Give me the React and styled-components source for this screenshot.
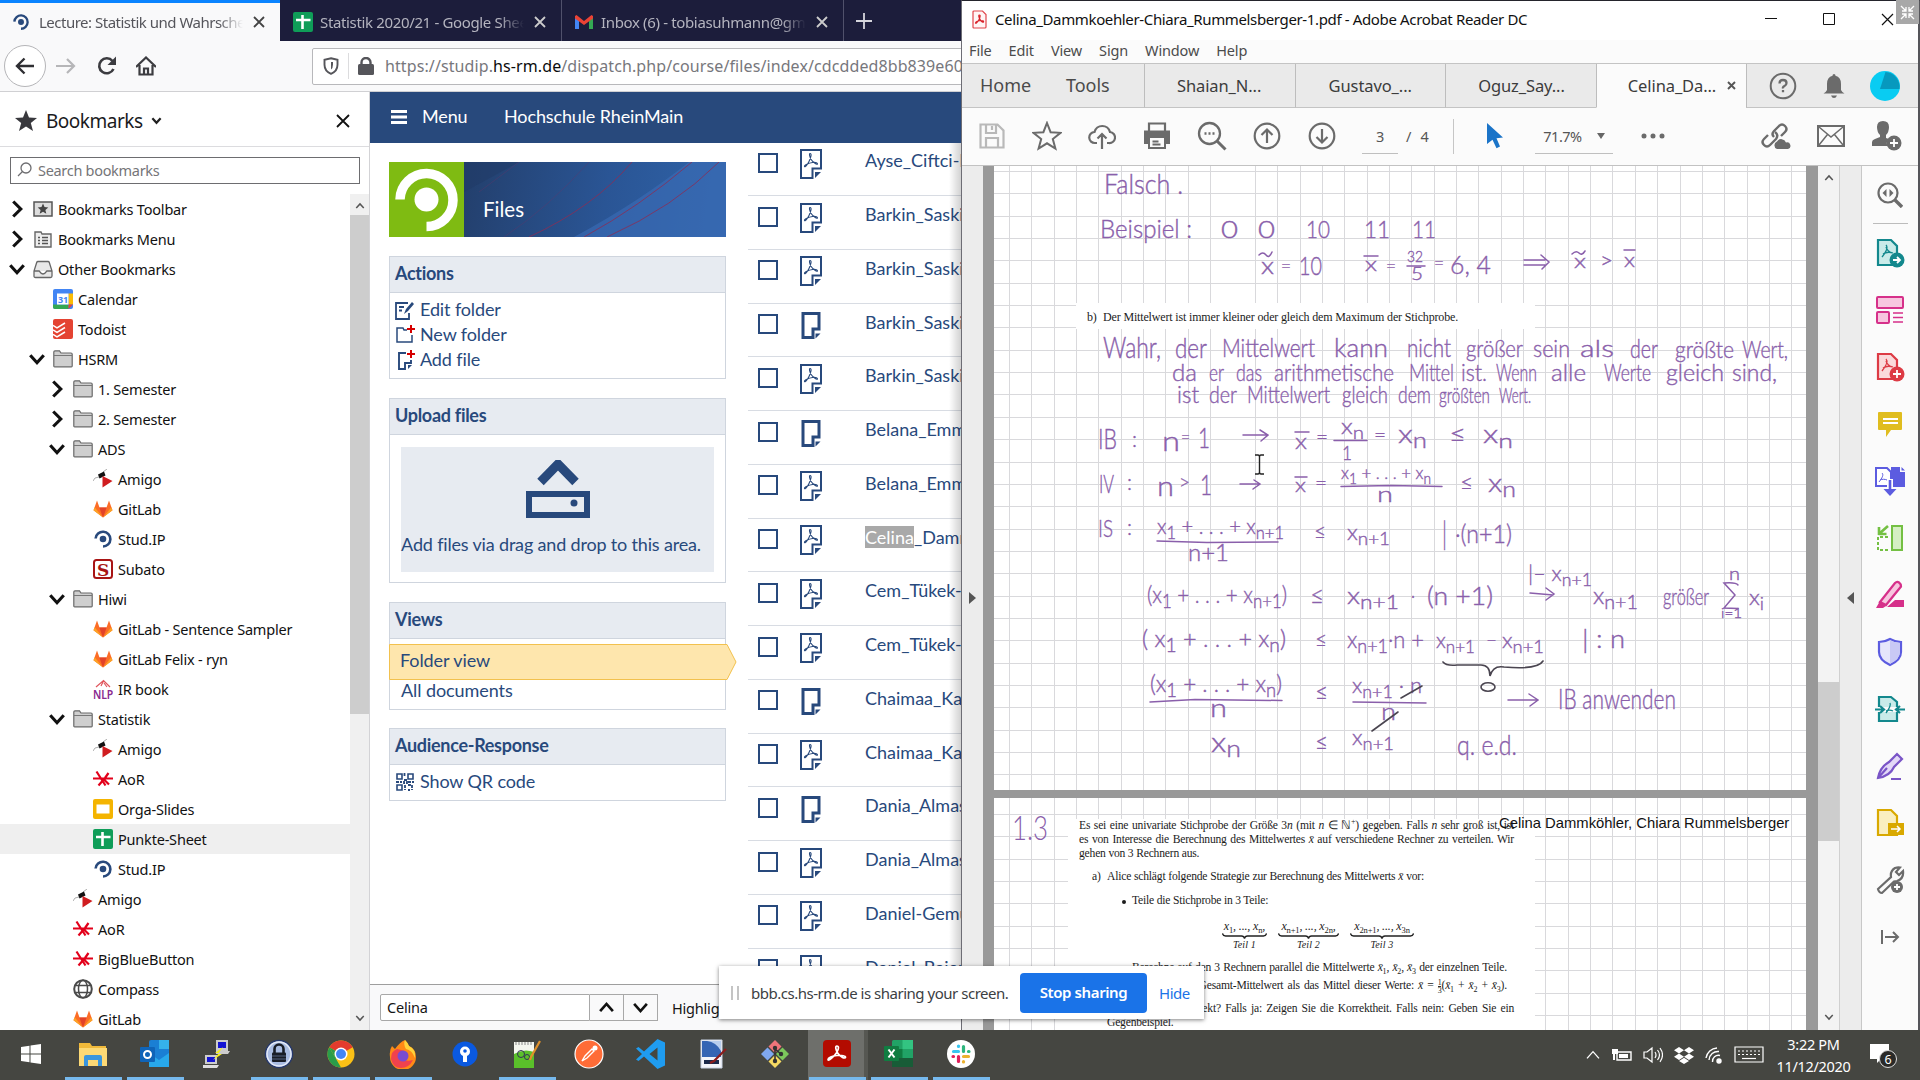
import React from "react";
import styled, { createGlobalStyle, css } from "styled-components";

const ui = `"Noto Sans", "Open Sans", sans-serif`;
const lato = `Lato, "Noto Sans", sans-serif`;
const navy = "#28497c";

const Global = createGlobalStyle`
  *, *::before, *::after { box-sizing: border-box; }
  html, body { margin: 0; padding: 0; overflow: hidden; }
  body { width: 1920px; height: 1080px; font-family: ${ui}; background: #1c1d3b; }
  svg { display: block; flex: none; }
`;

const Desktop = styled.div`
  position: relative;
  width: 1920px;
  height: 1080px;
  display: grid;
  grid-template: 1030px 50px / 961px 959px;
  overflow: hidden;
`;

/* ---------- Firefox ---------- */

const Browser = styled.section`
  display: grid;
  grid-template-rows: 41px 51px 938px;
  background: #fff;
  overflow: hidden;
  min-width: 0;
`;

const TabStrip = styled.div`
  display: flex;
  background: #1c1d3b;
  overflow: hidden;
`;

const BrowserTab = styled.div`
  flex: none;
  width: 282px;
  height: 41px;
  display: flex;
  align-items: center;
  padding: 2px 15px 0 13px;
  border-right: 1px solid #50516b;
  color: #b4b4bf;
  ${(p) =>
    p.$active &&
    css`
      width: 280px;
      padding: 0 15px 0 12px;
      background: #f9f9fa;
      border-right: 0;
      border-top: 3px solid #0a84ff;
      color: #55555b;
    `}
`;

const TabTitle = styled.span`
  flex: 1;
  margin-left: ${(p) => p.$gap}px;
  margin-right: 10px;
  font-size: 15px;
  letter-spacing: ${(p) => p.$ls}px;
  white-space: nowrap;
  overflow: hidden;
  mask-image: linear-gradient(to right, #000 88%, transparent);
`;

const NewTab = styled.div`
  display: flex;
  align-items: center;
  padding-left: 12px;
`;

const NavBar = styled.div`
  display: flex;
  align-items: center;
  background: #f9f9fa;
  border-bottom: 1px solid #d0d0d3;
  padding-left: 4px;
  overflow: hidden;
`;

const BackButton = styled.div`
  flex: none;
  width: 42px;
  height: 42px;
  border: 1px solid #b5b5b8;
  border-radius: 50%;
  background: #fff;
  display: grid;
  place-items: center;
  margin-right: 10px;
`;

const NavIcon = styled.div`
  flex: none;
  width: 20px;
  margin-right: ${(p) => p.$gap}px;
`;

const UrlBox = styled.div`
  flex: none;
  width: 680px;
  height: 37px;
  display: flex;
  align-items: center;
  background: #fff;
  border: 1px solid #b8b8bb;
  border-radius: 2px;
  padding-left: 10px;
`;

const UrlDivider = styled.i`
  width: 1px;
  height: 26px;
  background: #dcdcde;
  margin: 0 9px;
`;

const UrlText = styled.span`
  margin-left: 11px;
  font-size: 16px;
  letter-spacing: 0.1px;
  color: #77777c;
  white-space: nowrap;
  b { font-weight: 400; color: #0c0c0d; }
`;

const BrowserBody = styled.div`
  display: grid;
  grid-template-columns: 370px 591px;
  min-height: 0;
`;

const Sidebar = styled.aside`
  display: grid;
  grid-template-rows: 55px 47px 836px;
  border-right: 1px solid #d3d3d6;
  min-height: 0;
`;

const SidebarHead = styled.div`
  display: flex;
  align-items: center;
  padding: 3px 19px 0 15px;
  border-bottom: 1px solid #dcdcdf;
  font-size: 19px;
  letter-spacing: -0.5px;
  color: #1b1b1e;
  span { margin: 0 8px 0 9px; }
  svg:last-child { margin-left: auto; }
`;

const SearchField = styled.div`
  height: 27px;
  margin: 10px 9px 0 10px;
  border: 1px solid #6d6d70;
  display: flex;
  align-items: center;
  gap: 6px;
  padding: 0 0 2px 6px;
  font-size: 14.5px;
  letter-spacing: -0.3px;
  color: #757578;
`;

const TreeArea = styled.div`
  display: grid;
  grid-template-columns: 350px 19px;
  min-height: 0;
`;

const Tree = styled.ul`
  list-style: none;
  margin: 0;
  padding: 0;
  overflow: hidden;
`;

const TreeRow = styled.li`
  height: 30px;
  display: flex;
  align-items: center;
  padding-left: ${(p) => 8 + p.$level * 20}px;
  background: ${(p) => (p.$selected ? "#efefef" : "transparent")};
  font-size: 14.5px;
  letter-spacing: -0.2px;
  color: #111;
  white-space: nowrap;
  span { margin-left: 5px; }
`;

const Twisty = styled.i`
  width: 18px;
  margin-right: 7px;
`;

const Scrollbar = styled.div`
  display: flex;
  flex-direction: column;
  align-items: center;
  justify-content: space-between;
  background: #f0f0f0;
  padding: 7px 0;
`;

const ScrollThumb = styled.i`
  width: 100%;
  height: ${(p) => p.$h}px;
  margin-top: ${(p) => p.$top}px;
  margin-bottom: auto;
  background: #cdcdcd;
`;

const Site = styled.main`
  display: grid;
  grid-template-rows: 51px 841px 46px;
  min-height: 0;
  font-family: ${lato};
  color: ${navy};
`;

const SiteBar = styled.header`
  background: ${navy};
  color: #fff;
  display: flex;
  align-items: center;
  padding: 0 0 1px 21px;
  font-size: 18px;
  letter-spacing: -0.13px;
  span { margin-top: -3px; }
  span:nth-of-type(1) { margin-left: 15px; width: 82px; }
`;

const SiteBody = styled.div`
  display: grid;
  grid-template-columns: 378px 213px;
  min-height: 0;
  overflow: hidden;
`;

const SiteSide = styled.div`
  padding: 19px 22px 0 19px;
`;

const Banner = styled.div`
  display: flex;
  height: 75px;
  margin-bottom: 19px;
  background: #29508c;
  position: relative;
  overflow: hidden;
`;

const BannerTitle = styled.span`
  position: absolute;
  left: 94px;
  top: 35px;
  font-size: 20.5px;
  line-height: 24px;
  color: #fff;
`;

const Widget = styled.section`
  border: 1px solid #cfd5de;
  height: ${(p) => p.$h}px;
  margin-bottom: ${(p) => p.$gap || 19}px;
`;

const WidgetTitle = styled.h2`
  margin: 0;
  height: 36px;
  line-height: 33px;
  padding-left: 5px;
  background: #e7ebf1;
  border-bottom: 1px solid #cfd5de;
  font-size: 18px;
  font-weight: 700;
  letter-spacing: -0.3px;
`;

const WidgetList = styled.div`
  padding: 4px 0 0 5px;
`;

const WidgetItem = styled.div`
  height: 25px;
  display: flex;
  align-items: center;
  gap: 5px;
  font-size: 18px;
  letter-spacing: -0.12px;
  span { margin-top: -1px; }
`;

const DropZone = styled.div`
  margin: 12px 11px;
  height: 125px;
  background: #e7ebf1;
  display: flex;
  flex-direction: column;
  align-items: center;
  padding-top: 13px;
  font-size: 18px;
  letter-spacing: -0.17px;
  span { margin: 13px 0 0 -13px; white-space: nowrap; }
`;

const ViewItem = styled.div`
  height: 25px;
  line-height: 21px;
  padding-left: 11px;
  font-size: 18px;
  letter-spacing: -0.08px;
`;

const ActiveView = styled.div`
  position: relative;
  width: 347px;
  height: 36px;
  margin: 5px 0 0 -1px;
  font-size: 18px;
  line-height: 33px;
  padding-left: 11px;
  letter-spacing: -0.08px;
  svg { position: absolute; left: 0; top: 0; }
  span { position: relative; }
`;

const FileTable = styled.div`
  position: relative;
  overflow: hidden;
  margin-top: -0.6px;
  &::after {
    content: "";
    position: absolute;
    inset: 0 0 0 auto;
    width: 12px;
    background: linear-gradient(to right, rgba(0, 0, 0, 0), rgba(0, 0, 0, 0.18));
  }
`;

const FileRow = styled.div`
  height: 53.75px;
  border-bottom: 1px solid #d8dce3;
  display: grid;
  grid-template-columns: 20px 22px 1fr;
  column-gap: 22px;
  padding-left: 10px;
`;

const CheckBox = styled.i`
  width: 20px;
  height: 20px;
  margin-top: 10.5px;
  border: 2px solid ${navy};
`;

const FileGlyph = styled.div`
  margin-top: 6.5px;
`;

const FileName = styled.span`
  margin: 7px 0 0 21px;
  font-size: 18px;
  line-height: 22px;
  white-space: nowrap;
  mark { background: #a9a9a9; color: #fff; }
`;

const FindBar = styled.div`
  display: flex;
  align-items: center;
  background: #f9f9fa;
  border-top: 1px solid #9e9e9e;
  padding-left: 10px;
  font-family: ${ui};
  font-size: 14.5px;
  letter-spacing: -0.2px;
  color: #151515;
`;

const FindInput = styled.div`
  flex: none;
  width: 210px;
  height: 27px;
  line-height: 25px;
  padding-left: 6px;
  border: 1px solid #a8a8a8;
  border-radius: 2px 0 0 2px;
  background: #fff;
`;

const FindButton = styled.div`
  flex: none;
  width: 34px;
  height: 27px;
  display: grid;
  place-items: center;
  border: 1px solid #a8a8a8;
  border-left: 0;
`;

const FindLabel = styled.span`
  margin-left: 14px;
`;

/* ---------- Acrobat ---------- */

const Reader = styled.section`
  display: grid;
  grid-template-rows: 39px 23px 45px 58px 864px;
  border-top: 1px solid #24242c;
  border-left: 1px solid #6d6d75;
  border-right: 2px solid #55555a;
  background: #fbfbfb;
  min-width: 0;
  overflow: hidden;
`;

const TitleBar = styled.div`
  display: flex;
  align-items: center;
  background: #fff;
  padding: 0 0 3px 10px;
  font-size: 15px;
  letter-spacing: -0.36px;
  color: #111;
  span { flex: none; margin-left: 8px; width: 770px; white-space: nowrap; }
`;

const WindowIcons = styled.div`
  display: flex;
  gap: 46px;
  align-items: center;
`;

const MenuBar = styled.div`
  display: flex;
  gap: 17px;
  align-items: center;
  padding: 0 0 4px 7px;
  font-size: 14.5px;
  letter-spacing: -0.15px;
  color: #4b4b4b;
`;

const DocTabs = styled.div`
  display: flex;
  background: #eaeaea;
  border-top: 1px solid #c4c4c4;
`;

const AppTab = styled.div`
  flex: none;
  width: ${(p) => p.$w}px;
  padding-left: ${(p) => p.$pad}px;
  border-bottom: 1px solid #c4c4c4;
  line-height: 42px;
  font-size: 18px;
  letter-spacing: -0.05px;
  color: #4b4b4b;
`;

const DocTab = styled.div`
  flex: none;
  width: 150.6px;
  border-left: 1px solid #bdbdbd;
  border-bottom: 1px solid ${(p) => (p.$active ? "#fbfbfb" : "#c4c4c4")};
  background: ${(p) => (p.$active ? "#fbfbfb" : "#eaeaea")};
  display: flex;
  align-items: center;
  padding-left: ${(p) => p.$pad}px;
  font-size: 16.5px;
  letter-spacing: -0.1px;
  color: #3c3c3c;
  svg { margin-left: 11px; }
`;

const TabTools = styled.div`
  flex: 1;
  display: flex;
  align-items: center;
  padding-left: 22px;
  border-left: 1px solid #bdbdbd;
  border-bottom: 1px solid #c4c4c4;
  svg:nth-child(2) { margin: 0 25px 0 26px; }
`;

const ToolBar = styled.div`
  display: flex;
  align-items: center;
  border-bottom: 1px solid #c2c2c2;
  padding: 0 0 1px 15px;
  color: #555;
  font-size: 14.5px;
`;

const ToolSlot = styled.div`
  flex: none;
  width: ${(p) => p.$w || 30}px;
  margin-right: ${(p) => p.$gap}px;
  display: grid;
  place-items: center;
`;

const Underlined = styled.div`
  flex: none;
  width: ${(p) => p.$w}px;
  height: 35px;
  border-bottom: 1px solid #bfbfbf;
  display: flex;
  align-items: center;
  justify-content: center;
  gap: 15px;
  letter-spacing: -0.5px;
`;

const PageTotal = styled.div`
  flex: none;
  display: flex;
  gap: 9px;
  width: 55px;
  padding-left: 8px;
`;

const ToolDivider = styled.i`
  flex: none;
  width: 1px;
  height: 35px;
  background: #c6c6c6;
`;

const Workspace = styled.div`
  display: grid;
  grid-template-columns: 21px 835px 21px 22px 57px;
  min-height: 0;
`;

const NavPane = styled.div`
  background: #ececec;
  border-left: ${(p) => (p.$line ? "1px solid #d0d0d0" : "0")};
  display: flex;
  align-items: center;
  justify-content: center;
`;

const Viewport = styled.div`
  background: #999;
  padding: 0 12px 0 11px;
  overflow: hidden;
`;

const Sheet = styled.article`
  position: relative;
  height: ${(p) => p.$h}px;
  margin-bottom: 8px;
  overflow: hidden;
  background-color: #fff;
  background-image: repeating-linear-gradient(
      to right,
      transparent 0 15px,
      #d9d9dc 15px 16px,
      transparent 16px 22.35px
    ),
    repeating-linear-gradient(
      to bottom,
      transparent 0 ${(p) => p.$y}px,
      #d9d9dc ${(p) => p.$y}px ${(p) => p.$y + 1}px,
      transparent ${(p) => p.$y + 1}px 22.35px
    );
  > svg { position: absolute; left: 0; top: 0; }
`;

const Clip = styled.div`
  margin: ${(p) => p.$top}px 0 0 ${(p) => p.$left}px;
  width: ${(p) => p.$w}px;
  height: ${(p) => p.$h}px;
  background: #fff;
  font-family: "Liberation Serif", "Times New Roman", serif;
  font-size: ${(p) => p.$size}px;
  letter-spacing: ${(p) => p.$ls}px;
  color: #1c1c1c;
  display: flow-root;
`;

const Line = styled.div`
  margin: ${(p) => p.$top || 0}px 0 0 ${(p) => p.$left}px;
  width: ${(p) => p.$w}px;
  height: 14px;
  line-height: 14px;
  white-space: nowrap;
  text-align-last: justify;
  sub, sup { font-size: 8px; line-height: 0; }
`;

const Labeled = styled.div`
  display: flex;
  margin-top: ${(p) => p.$top}px;
  margin-left: ${(p) => p.$left}px;
  > span { flex: none; width: ${(p) => p.$label}px; line-height: 14px; }
`;

const Bullet = styled.i`
  flex: none;
  width: 4px;
  height: 4px;
  margin: 6px 6px 0 0;
  border-radius: 50%;
  background: #1c1c1c;
`;

const Parts = styled.div`
  display: flex;
  gap: 11px;
  margin: 12px 0 0 154px;
`;

const Part = styled.div`
  width: ${(p) => p.$w}px;
  text-align: center;
  font-style: italic;
  font-size: 12px;
  line-height: 13px;
  letter-spacing: -0.15px;
  white-space: nowrap;
  sub { font-size: 8.5px; line-height: 0; font-style: normal; }
  small { display: block; font-size: 10px; line-height: 12px; letter-spacing: 0.15px; }
`;

const Author = styled.div`
  position: absolute;
  left: 505px;
  top: 16px;
  font: 14.8px/18px "Liberation Sans", Arial, sans-serif;
  color: #111;
  white-space: nowrap;
`;

const Frac = styled.span`
  display: inline-flex;
  flex-direction: column;
  vertical-align: middle;
  font-size: 8px;
  line-height: 7px;
  text-align: center;
  b { font-weight: 400; border-bottom: 1px solid #333; }
`;

const PageScroll = styled(Scrollbar)`
  background: #f3f3f3;
  padding: 7px 0 8px;
`;

const ToolPane = styled.div`
  background: #fbfbfb;
  border-left: 1px solid #c8c8c8;
  display: flex;
  flex-direction: column;
  align-items: center;
  overflow: hidden;
`;

const PaneTool = styled.div`
  flex: none;
  height: 57px;
  display: grid;
  place-items: center;
`;

const PaneRule = styled.i`
  flex: none;
  width: 35px;
  height: 1px;
  background: #bcbcbc;
`;

/* ---------- Overlays & taskbar ---------- */

const ShareBar = styled.div`
  position: absolute;
  left: 719px;
  top: 966px;
  width: 485px;
  height: 53px;
  background: #fff;
  box-shadow: 0 1px 4px rgba(0, 0, 0, 0.5);
  display: flex;
  align-items: center;
  padding-left: 12px;
  font-size: 15px;
  letter-spacing: -0.48px;
  color: #3c4043;
  white-space: nowrap;
`;

const Grip = styled.i`
  width: 8px;
  height: 14px;
  border: solid #c4c4c4;
  border-width: 0 2px;
  margin-right: 12px;
`;

const ShareText = styled.span`
  width: 269px;
`;

const StopButton = styled.div`
  width: 127px;
  height: 40px;
  line-height: 39px;
  border-radius: 4px;
  background: #1a73e8;
  color: #fff;
  font-weight: 600;
  text-align: center;
  letter-spacing: -0.4px;
  margin-right: 12px;
`;

const HideLink = styled.span`
  color: #1a73e8;
`;

const FullBadge = styled.div`
  position: absolute;
  right: 1px;
  top: 0;
  width: 23px;
  height: 24px;
  background: #a8a8a8;
  display: grid;
  place-items: center;
`;

const TaskBar = styled.footer`
  grid-column: 1 / 3;
  background: #454641;
  display: flex;
  padding-left: 0;
`;

const TaskItem = styled.div`
  flex: none;
  width: 62px;
  height: 50px;
  display: grid;
  place-items: center;
  background: ${(p) =>
    p.$active ? "linear-gradient(to right, transparent 2px, #6e6f6b 2px 58px, #565752 58px)" : "none"};
  border-style: solid;
  border-color: transparent;
  border-width: 0 0 3px;
  border-image: ${(p) =>
      p.$open
        ? `linear-gradient(to right, transparent 6px, #76b9ed 6px 57px, transparent 57px)`
        : "linear-gradient(transparent, transparent)"}
    3;
`;

const Tray = styled.div`
  margin-left: auto;
  display: flex;
  align-items: center;
  padding-right: 22px;
  gap: 11px;
`;

const Clock = styled.div`
  width: 77px;
  margin-right: 3px;
  text-align: center;
  font-size: 14.5px;
  line-height: 22px;
  letter-spacing: -0.3px;
  color: #fff;
`;

/* ---------- Icons ---------- */

const Svg = ({ w = 20, h, vb, children, ...rest }) => (
  <svg width={w} height={h || w} viewBox={vb || `0 0 ${w} ${h || w}`} fill="none" {...rest}>
    {children}
  </svg>
);

const Cross = ({ s = 11, c = "currentColor", t = 1.8 }) => (
  <Svg w={s} stroke={c} strokeWidth={t}>
    <path d={`M1 1 L${s - 1} ${s - 1} M${s - 1} 1 L1 ${s - 1}`} />
  </Svg>
);

const Chevron = ({ dir = "down", w = 12, c = "#111", t = 2.4 }) => {
  const d = { down: "M1.5 3.5 6 8.5 10.5 3.5", up: "M1.5 8.5 6 3.5 10.5 8.5", right: "M3.5 1 8.5 6 3.5 11" }[dir];
  return (
    <Svg w={w} vb="0 0 12 12" stroke={c} strokeWidth={t}>
      <path d={d} />
    </Svg>
  );
};

const favicons = {
  toolbar: (
    <>
      <rect x="1" y="3" width="18" height="14" fill="#ddd" stroke="#555" strokeWidth="1.5" />
      <path d="M10 4.500l1.500 3.600 3.800.3-2.900 2.500.9 3.800-3.300-2-3.300 2 .9-3.800-2.900-2.500 3.800-.3z" fill="#444" />
    </>
  ),
  menu: (
    <>
      <path d="M2 3h6l1 2h9v13H2z" fill="#eee" stroke="#666" strokeWidth="1.4" />
      <path d="M5 8.500h2M9 8.500h6M5 11.500h2M9 11.500h6M5 14.500h2M9 14.500h6" stroke="#555" strokeWidth="1.3" />
    </>
  ),
  inbox: (
    <path d="M5 2.500h10q1 0 1.300 1L19 12v5q0 1.500-1.500 1.500h-15Q1 18.500 1 17v-5l2.700-8.500q.3-1 1.300-1zM1 12h5c1 0 1 3 4 3s3-3 4-3h5" fill="#e8e8e8" stroke="#666" strokeWidth="1.3" />
  ),
  folder: (
    <>
      <path d="M.8 17V3q0-1.200 1.200-1.200h4.500L8 4h10q1.200 0 1.200 1.200V17q0 .8-.8.8H1.600q-.8 0-.8-.8z" fill="#cfcfcf" stroke="#6a6a6a" strokeWidth="1.2" />
      <path d="M1 6.500h18" stroke="#777" />
    </>
  ),
  calendar: (
    <>
      <rect x="0" y="0" width="20" height="20" rx="2" fill="#4285f4" />
      <path d="M15.500 4.500H20V15.500h-4.500z" fill="#fbbc04" />
      <path d="M4.500 15.500h11V20H2q-2 0-2-2v-2.500z" fill="#34a853" />
      <path d="M15.500 15.500H20L15.500 20z" fill="#ea4335" />
      <rect x="4" y="4.500" width="11.500" height="11" fill="#fff" />
      <text x="10" y="13.500" fontFamily={ui} fontSize="9" fontWeight="700" textAnchor="middle" fill="#4285f4">31</text>
    </>
  ),
  todoist: (
    <>
      <rect width="20" height="20" rx="2" fill="#e44332" />
      <path d="M0 6.500l4 2.300 8-4.800M0 11l4 2.300 8-4.800M0 15.500l4 2.300 8-4.800" stroke="#fff" strokeWidth="1.5" />
    </>
  ),
  amigo: (
    <>
      <path d="M0 12Q1 8 6 8M10 3l4-3" stroke="#999" strokeWidth=".8" />
      <path d="M5 5.500l6-3 1.500 4-6 3z" fill="#111" />
      <path d="M9.500 7L19.500 12 9.500 18.500z" fill="#d01c1f" />
    </>
  ),
  gitlab: (
    <>
      <path d="M10 18.500L.5 11.300 4 1.500l2.500 7h7l2.500-7 3.500 9.800z" fill="#fc6d26" />
      <path d="M10 18.500L6.300 8.500h7.400z" fill="#e24329" />
      <path d="M10 18.500L.5 11.300l1.200-3zM10 18.500l9.500-7.200-1.200-3z" fill="#fca326" />
    </>
  ),
  studip: (
    <>
      <circle cx="10" cy="10" r="3.3" fill={navy} />
      <path d="M2.600 9.500A7.400 7.400 0 1 1 10 17.500" stroke={navy} strokeWidth="2.6" />
    </>
  ),
  subato: (
    <>
      <rect x="1" y="1" width="18" height="18" rx="2.5" fill="#fff" stroke="#a81414" strokeWidth="2" />
      <text x="10" y="16.5" fontFamily="DejaVu Serif, serif" fontSize="17" fontWeight="700" textAnchor="middle" fill="#a81414">S</text>
    </>
  ),
  nlp: (
    <>
      <path d="M3 8l7.500-6.500L17 8M10.500 2L8 7M11 4l3 4" stroke="#e0555c" strokeWidth="1.2" />
      <text x="0" y="19.5" fontFamily={ui} fontSize="12.5" fontWeight="600" textLength="20" lengthAdjust="spacingAndGlyphs" fill="#8a2a8f">NLP</text>
    </>
  ),
  aor: <path d="M0 9.500h20M3.500 2.500l9 14M5.500 16.500L12 9l3.500-5M10 9.500l6 6" stroke="#e2001a" strokeWidth="2.2" />,
  slides: (
    <>
      <rect width="20" height="20" rx="2" fill="#f4b400" />
      <rect x="3.5" y="5.5" width="13" height="9" fill="#fff" />
    </>
  ),
  sheet: (
    <>
      <rect width="20" height="20" rx="2" fill="#0f9d58" />
      <path d="M9.500 3v14M3 8h14.500" stroke="#fff" strokeWidth="2.6" />
    </>
  ),
  globe: (
    <g stroke="#4a4a4a" strokeWidth="1.5">
      <circle cx="10" cy="10" r="8.8" strokeWidth="2" />
      <ellipse cx="10" cy="10" rx="4.5" ry="8.8" />
      <path d="M2.500 6.500h15M2.500 13.500h15" />
    </g>
  ),
};

const tree = [
  [0, "Bookmarks Toolbar", "toolbar", "right"],
  [0, "Bookmarks Menu", "menu", "right"],
  [0, "Other Bookmarks", "inbox", "down"],
  [1, "Calendar", "calendar"],
  [1, "Todoist", "todoist"],
  [1, "HSRM", "folder", "down"],
  [2, "1. Semester", "folder", "right"],
  [2, "2. Semester", "folder", "right"],
  [2, "ADS", "folder", "down"],
  [3, "Amigo", "amigo"],
  [3, "GitLab", "gitlab"],
  [3, "Stud.IP", "studip"],
  [3, "Subato", "subato"],
  [2, "Hiwi", "folder", "down"],
  [3, "GitLab - Sentence Sampler", "gitlab"],
  [3, "GitLab Felix - ryn", "gitlab"],
  [3, "IR book", "nlp"],
  [2, "Statistik", "folder", "down"],
  [3, "Amigo", "amigo"],
  [3, "AoR", "aor"],
  [3, "Orga-Slides", "slides"],
  [3, "Punkte-Sheet", "sheet"],
  [3, "Stud.IP", "studip"],
  [2, "Amigo", "amigo"],
  [2, "AoR", "aor"],
  [2, "BigBlueButton", "aor"],
  [2, "Compass", "globe"],
  [2, "GitLab", "gitlab"],
];

const files = [
  ["pdf", "Ayse_Ciftci-L"],
  ["pdf", "Barkin_Saskia"],
  ["pdf", "Barkin_Saskia"],
  ["file", "Barkin_Saskia"],
  ["pdf", "Barkin_Saskia"],
  ["file", "Belana_Emma"],
  ["pdf", "Belana_Emma"],
  ["pdf", "_Dammk", "Celina"],
  ["pdf", "Cem_Tükek-"],
  ["pdf", "Cem_Tükek-"],
  ["file", "Chaimaa_Ka"],
  ["pdf", "Chaimaa_Ka"],
  ["file", "Dania_Almas"],
  ["pdf", "Dania_Almas"],
  ["pdf", "Daniel-Gemü"],
  ["pdf", "Daniel_Baier"],
];

const PdfFile = () => (
  <Svg w={22} h={30}>
    <path d="M1 1h20v18.500h-8.500V29H1z" stroke={navy} strokeWidth="2" />
    <path d="M15 23h6l-6 6z" fill={navy} />
    <path d="M10 4.500c2 0 1 4-1 8s-4 6-4.500 5 4-3.500 8-4 5 .5 5 1.500-4-1-6-4-2.500-6.500-1.500-6.500z" stroke={navy} strokeWidth="1.1" />
  </Svg>
);

const PlainFile = () => (
  <Svg w={22} h={30}>
    <path d="M3 3.500h16v15.500h-6v8.500H3z" stroke={navy} strokeWidth="3" />
    <path d="M15.500 23.500h5l-5 5z" fill={navy} />
  </Svg>
);

/* ---------- Handwritten notes ---------- */

const ink = "#8a5fab";

const Ink = ({ x, y, w, s = 22, children }) => {
  const parts = children.split(/(_\{[^}]*\})/).filter(Boolean);
  let lowered = false;
  return (
    <text x={x} y={y} fontSize={s} textLength={w} lengthAdjust="spacingAndGlyphs">
      {parts.map((p, i) => {
        const sub = p.startsWith("_{");
        const dy = sub ? 4.5 : lowered ? -4.5 : 0;
        lowered = sub;
        return (
          <tspan key={i} dy={dy} fontSize={sub ? s * 0.82 : s}>
            {sub ? p.slice(2, -1) : p}
          </tspan>
        );
      })}
    </text>
  );
};

const notes = [
  [1104, 194, 79, 27, "Falsch ."],
  [1100, 238, 92, 26, "Beispiel :"],
  [1221, 238, 17, 23, "0"],
  [1258, 238, 17, 23, "0"],
  [1306, 238, 24, 23, "10"],
  [1364, 238, 26, 23, "11"],
  [1412, 238, 24, 23, "11"],
  [1261, 274, 13, 23, "x"],
  [1281, 273, 10, 20, "="],
  [1299, 275, 23, 26, "10"],
  [1365, 271, 12, 20, "x"],
  [1386, 273, 10, 20, "="],
  [1407, 262, 16, 16, "32"],
  [1411, 280, 12, 18, "5"],
  [1434, 270, 10, 20, "="],
  [1450, 274, 41, 26, "6, 4"],
  [1574, 268, 12, 20, "x"],
  [1600, 268, 13, 22, ">"],
  [1624, 267, 11, 20, "x"],
  [1103, 358, 58, 29, "Wahr,"],
  [1175, 358, 32, 27, "der"],
  [1222, 357, 93, 25, "Mittelwert"],
  [1334, 357, 54, 25, "kann"],
  [1407, 357, 44, 25, "nicht"],
  [1466, 357, 57, 24, "größer"],
  [1533, 357, 37, 24, "sein"],
  [1580, 357, 34, 24, "als"],
  [1630, 358, 28, 25, "der"],
  [1675, 358, 59, 24, "größte"],
  [1742, 358, 46, 24, "Wert,"],
  [1172, 381, 25, 24, "da"],
  [1209, 381, 15, 24, "er"],
  [1236, 381, 26, 24, "das"],
  [1274, 381, 120, 24, "arithmetische"],
  [1409, 381, 45, 24, "Mittel"],
  [1461, 381, 26, 23, "ist."],
  [1496, 381, 41, 23, "Wenn"],
  [1551, 381, 35, 23, "alle"],
  [1604, 381, 47, 23, "Werte"],
  [1666, 381, 58, 23, "gleich"],
  [1732, 381, 45, 23, "sind,"],
  [1177, 403, 22, 23, "ist"],
  [1209, 403, 28, 23, "der"],
  [1247, 403, 83, 23, "Mittelwert"],
  [1342, 403, 46, 23, "gleich"],
  [1398, 403, 33, 23, "dem"],
  [1439, 403, 51, 21, "größten"],
  [1499, 403, 32, 21, "Wert."],
  [1098, 449, 19, 28, "IB"],
  [1132, 447, 5, 22, ":"],
  [1162, 451, 18, 28, "n"],
  [1181, 444, 9, 20, "="],
  [1198, 448, 12, 28, "1"],
  [1295, 449, 12, 22, "x"],
  [1316, 444, 12, 22, "="],
  [1341, 434, 23, 22, "x_{n}"],
  [1342, 460, 10, 20, "1"],
  [1374, 442, 12, 22, "="],
  [1398, 443, 29, 26, "x_{n}"],
  [1449, 442, 17, 23, "≤"],
  [1483, 443, 30, 25, "x_{n}"],
  [1099, 493, 15, 25, "IV"],
  [1127, 490, 5, 22, ":"],
  [1157, 496, 17, 28, "n"],
  [1179, 489, 11, 20, ">"],
  [1200, 495, 12, 27, "1"],
  [1295, 492, 11, 20, "x"],
  [1315, 490, 12, 22, "="],
  [1341, 479, 90, 18, "x_{1} + . . . + x_{n}"],
  [1377, 502, 16, 21, "n"],
  [1460, 490, 13, 21, "≤"],
  [1488, 492, 28, 26, "x_{n}"],
  [1098, 537, 15, 24, "IS"],
  [1127, 535, 5, 22, ":"],
  [1157, 534, 127, 21, "x_{1} + . . . + x_{n+1}"],
  [1188, 561, 41, 23, "n+1"],
  [1314, 539, 12, 21, "≤"],
  [1347, 540, 43, 22, "x_{n+1}"],
  [1442, 544, 5, 32, "|"],
  [1455, 543, 57, 26, "·(n+1)"],
  [1147, 603, 140, 24, "(x_{1} + . . . + x_{n+1})"],
  [1310, 604, 14, 25, "≤"],
  [1347, 604, 52, 24, "x_{n+1}"],
  [1411, 603, 4, 22, "·"],
  [1427, 605, 66, 25, "(n +1)"],
  [1528, 581, 64, 22, "|– x_{n+1}"],
  [1593, 604, 45, 24, "x_{n+1}"],
  [1663, 605, 46, 24, "größer"],
  [1729, 580, 11, 17, "n"],
  [1721, 618, 21, 13, "i=1"],
  [1749, 605, 15, 21, "x_{i}"],
  [1142, 647, 144, 24, "( x_{1} + . . . + x_{n})"],
  [1315, 647, 12, 21, "≤"],
  [1347, 648, 77, 24, "x_{n+1}·n +"],
  [1436, 648, 39, 22, "x_{n+1}"],
  [1486, 646, 11, 20, "–"],
  [1502, 648, 42, 22, "x_{n+1}"],
  [1582, 648, 43, 25, "| : n"],
  [1150, 692, 132, 24, "(x_{1} + . . . + x_{n})"],
  [1210, 717, 17, 25, "n"],
  [1315, 700, 13, 23, "≤"],
  [1352, 693, 70, 22, "x_{n+1} · n"],
  [1381, 720, 15, 23, "n"],
  [1558, 709, 118, 27, "IB anwenden"],
  [1211, 752, 30, 28, "x_{n}"],
  [1315, 750, 13, 23, "≤"],
  [1352, 745, 42, 22, "x_{n+1}"],
  [1457, 755, 60, 28, "q. e.d."],
];

const InkLayer = () => (
  <svg width="812" height="624" viewBox="994 166 812 624" fill="none">
    <g fill={ink} stroke={ink} strokeWidth=".4" fontFamily={lato} fontWeight="300">
      {notes.map(([x, y, w, s, t], i) => (
        <Ink key={i} x={x} y={y} w={w} s={s}>
          {t}
        </Ink>
      ))}
    </g>
    <g stroke={ink} strokeWidth="1.5" strokeLinecap="round">
      <path d="M1259 255q4-4 7 0t6-3M1364 256h14M1572 254q4-4 7-1t6-2M1624 250h11" />
      <path d="M1407 266h18" />
      <path d="M1524 260h21M1524 265h21M1541 255l8 7-7 7" />
      <path d="M1243 435h24M1260 430l8 5-7 6M1240 484h20M1254 480l6 4-7 5" />
      <path d="M1295 432h14M1295 477h12M1334 440.500h33M1341 486.500l50-1 51 1" />
      <path d="M1157 541l50 1.500 71-.5" />
      <path d="M1530 593l23 2M1546 588l8 6-8 6" />
      <path d="M1738 585q-2-3-14-2l11 12-11 13 14 .5" />
      <path d="M1150 702l45-2.500 87 1M1353 702l73 1M1508 700h29M1529 694l9 6-8 6" />
    </g>
    <g stroke="#4a4550" strokeWidth="1.6" strokeLinecap="round">
      <path d="M1443 662q3 4 14 3h24q9 0 9 11 3-11 14-9 34 3 39-6" />
      <ellipse cx="1488" cy="687" rx="7" ry="4.3" />
      <path d="M1401 698l21-12M1372 731l26-19" />
    </g>
    <path d="M1255 455h3q1.500 0 1.500 2v15q0 2-1.500 2h-3M1264 455h-3q-1.500 0-1.500 2v15q0 2 1.500 2h3" stroke="#222" strokeWidth="1.4" />
  </svg>
);

const BraceUnder = ({ w }) => (
  <Svg w={w} h={6} stroke="#222" strokeWidth="1.3">
    <path d={`M.5 .5q.5 2.500 3 2.500H${w / 2 - 3}q2.500 0 3 2.500 .5-2.500 3-2.500H${w - 3.5}q2.500 0 3-2.500`} />
  </Svg>
);

const xbar = <i>x̄</i>;

/* ---------- Acrobat icons ---------- */

const G = "#6b6b6b";

const PdfPage = ({ c, bg }) => (
  <>
    <path d="M3 2h13l6 6v19H3z" fill={bg} stroke={c} strokeWidth="2.2" />
    <path d="M11 7c2 2 0 7-4 12M8 16c3-2 7-2 10-1M11 9c1 3 3 5 6 6" stroke={c} strokeWidth="1.3" />
  </>
);

const paneTools = [
  <Svg w={30}>
    <PdfPage c="#13888d" bg="#c9ebe9" />
    <circle cx="22" cy="22" r="7.5" fill="#13888d" />
    <path d="M18 22h7M22 19l3 3-3 3" stroke="#fff" strokeWidth="1.8" />
  </Svg>,
  <Svg w={30} stroke="#d6308a" strokeWidth="2">
    <rect x="2" y="2" width="26" height="11" rx="1" fill="#f7c6df" />
    <rect x="2" y="17" width="12" height="11" rx="1" fill="#f7c6df" />
    <path d="M18 18h10M18 22.500h10M18 27h10" strokeWidth="1.5" />
  </Svg>,
  <Svg w={30}>
    <PdfPage c="#dd3b45" bg="#fadadb" />
    <circle cx="22" cy="22" r="7.5" fill="#dd3b45" />
    <path d="M18 22h8M22 18v8" stroke="#fff" strokeWidth="1.8" />
  </Svg>,
  <Svg w={30}>
    <path d="M4 3h22q1 0 1 1v16q0 1-1 1H16l-5 7v-7H4q-1 0-1-1V4q0-1 1-1z" fill="#e0bd1f" />
    <path d="M8 10h15M8 14h15" stroke="#fff" strokeWidth="1.8" />
  </Svg>,
  <Svg w={32}>
    <path d="M2 3h11l4 4v14H2z" stroke="#5c5ce0" strokeWidth="2" fill="#fff" />
    <path d="M17 2h9v5h5v15H17zM27.500 2L31 5.500h-3.500z" fill="#5c5ce0" />
    <path d="M8 8c2 2 0 5-3 9M6 15c2-1 5-1 7 0" stroke="#5c5ce0" />
    <path d="M16 14v12" stroke="#fff" strokeWidth="6" />
    <path d="M16 15v11" stroke="#5c5ce0" strokeWidth="2.6" />
    <path d="M9.500 24h13L16 31z" fill="#5c5ce0" />
  </Svg>,
  <Svg w={30} stroke="#74c043" strokeWidth="2">
    <rect x="17" y="3" width="10" height="24" fill="#d5efc3" />
    <path d="M13 14H3v13h10" strokeDasharray="3 2" />
    <path d="M4 4v8M3.500 11h8M5 10l8-7" strokeWidth="2.6" />
  </Svg>,
  <Svg w={30}>
    <path d="M5 22L20 3q2-2 4-.5t2 4L11 25z" fill="#f7c6df" stroke="#d6308a" strokeWidth="2.2" />
    <path d="M1 28l4-7 6 5-3 2zM12 27l8-7h9v7z" fill="#d6308a" />
  </Svg>,
  <Svg w={28} h={30}>
    <path d="M14 2q5 3 11 3v10q0 8-11 13Q3 23 3 15V5q6 0 11-3z" fill="#e6e6fb" stroke="#5c5ce0" strokeWidth="2.2" />
    <path d="M14 3q5 3 10 3v9q0 7-10 12z" fill="#c9c9f5" />
  </Svg>,
  <Svg w={30}>
    <path d="M4 13V3h12l6 5v5M4 18v9h18v-9" fill="#c9ebe9" stroke="#13888d" strokeWidth="2.2" />
    <path d="M0 15.500h8M5 12l4 3.500-4 3.500M30 15.500h-8M25 12l-4 3.500 4 3.500" stroke="#13888d" strokeWidth="2.2" />
    <path d="M15 9c1 2-1 6-4 10M11 17c2-1 5-1 7 0" stroke="#13888d" strokeWidth="1.3" />
  </Svg>,
  <Svg w={30} stroke="#7a55c7" strokeWidth="2.2">
    <path d="M3 27Q5 16 14 11l8-8 5 5-8 8Q15 25 3 27zM3 27l9-10M16 28h10" fill="#e3d8f7" />
  </Svg>,
  <Svg w={30}>
    <path d="M3 2h13l6 6v19H3z" fill="#faefc0" stroke="#d9a900" strokeWidth="2.2" />
    <rect x="13" y="15" width="16" height="12" fill="#d9a900" />
    <path d="M16 21h9M22 18l3 3-3 3" stroke="#fff" strokeWidth="1.5" />
  </Svg>,
  <Svg w={30}>
    <path d="M3 24l13-12q-1-6 4-9 3-1 5-.5L21 7l3 3 4-4q1 8-6 10l-3 .5L7 28q-3 0-4-4z" stroke={G} strokeWidth="2.2" />
    <circle cx="22" cy="22" r="6" fill={G} />
    <path d="M19 22h6M22 19v6" stroke="#fff" strokeWidth="1.8" />
  </Svg>,
];

const toolbarIcons = [
  [
    "save",
    <Svg w={28} stroke="#b9b9b9" strokeWidth="2.2">
      <path d="M2.500 2.500h17l6 6v17h-23zM8 3v8h10V3M14 4v4M8 25v-9h12v9" />
    </Svg>,
  ],
  [
    "star",
    <Svg w={30} stroke={G} strokeWidth="2">
      <path d="M15 2l3.600 9.200 9.900.6-7.700 6.200 2.600 9.600-8.400-5.300-8.400 5.300 2.600-9.600L1.500 11.800l9.900-.6z" />
    </Svg>,
  ],
  [
    "upload",
    <Svg w={28} stroke={G} strokeWidth="2.2">
      <path d="M9 21H7a5.500 5.500 0 0 1-.5-11A8 8 0 0 1 22 10a5.500 5.500 0 0 1-1 11h-2M14 27V12M9.500 16.500L14 12l4.500 4.500" />
    </Svg>,
  ],
  [
    "print",
    <Svg w={28}>
      <path d="M6 9V1.500h16V9" stroke={G} strokeWidth="2.2" />
      <path d="M1 8.500h26V22h-4v-7H5v7H1z" fill={G} />
      <path d="M6 15h16v11H6zM9.500 19.500h6M9.500 22.500h8" stroke={G} strokeWidth="2" />
    </Svg>,
  ],
  [
    "zoom",
    <Svg w={30} stroke={G} strokeWidth="2.3">
      <circle cx="12.5" cy="12.5" r="10.5" />
      <path d="M20 20l8.500 8.500" strokeWidth="3" />
      <path d="M7.500 12.500h10.500" strokeDasharray="2 2" />
    </Svg>,
  ],
  [
    "up",
    <Svg w={28} stroke={G} strokeWidth="2.2">
      <circle cx="14" cy="14" r="12.3" />
      <path d="M14 21V8M8.500 13L14 7.500l5.500 5.500" />
    </Svg>,
  ],
  [
    "down",
    <Svg w={28} stroke={G} strokeWidth="2.2">
      <circle cx="14" cy="14" r="12.3" />
      <path d="M14 7v13M8.500 15l5.500 5.500 5.500-5.500" />
    </Svg>,
  ],
];

/* ---------- Taskbar icons ---------- */

const taskItems = [
  ["start", <Svg w={20}><path d="M0 3l8.500-1.300v7.800H0zM9.500 1.500L20 0v9.500H9.500zM0 10.500h8.500v7.800L0 17zM9.500 10.500H20V20L9.500 18.500z" fill="#fff" /></Svg>],
  ["explorer", <Svg w={28} h={26}><path d="M0 2h11l2 3h14v20H0z" fill="#f0b93a" /><path d="M0 7h28v18H0z" fill="#fcd975" /><path d="M5 25v-9q0-2 2-2h14q2 0 2 2v9h-4v-6H9v6z" fill="#3a96dd" /></Svg>, true],
  ["outlook", <Svg w={30}><rect x="9" y="1" width="20" height="27" rx="2" fill="#1a7fd4" /><path d="M19 1h10v9H19z" fill="#35b1ea" /><path d="M9 14l10 7 10-7v14H9z" fill="#28a8ea" /><rect x="0" y="8" width="15" height="15" rx="1" fill="#0f64b8" /><circle cx="7.5" cy="15.5" r="3.5" stroke="#fff" strokeWidth="2" /></Svg>, true],
  ["putty", <Svg w={30}><path d="M14 1h12v11H14z" fill="#ccc" /><path d="M16 3h8v6h-8z" fill="#1414d2" /><path d="M14 12h14l-2 3H14zM3 16h12v9H3z" fill="#ccc" /><path d="M5 18h8v5H5z" fill="#1414d2" /><path d="M1 26h16l-2 3H1z" fill="#ddd" /><path d="M21 8l-8 6h4l-6 7 9-6h-4z" fill="#f6ee1d" /></Svg>],
  ["keepass", <Svg w={30}><circle cx="15" cy="15" r="13.5" fill="#a9bce2" stroke="#27396b" strokeWidth="1.5" /><circle cx="15" cy="15" r="12" stroke="#e4eaf7" strokeWidth="1.5" /><path d="M10.500 14v-4a4.500 4.500 0 0 1 9 0v4" stroke="#181c26" strokeWidth="2.6" /><rect x="8" y="13.5" width="14" height="9.5" rx="1" fill="#181c26" /><path d="M8 17h14M8 20h14" stroke="#6f7ea8" strokeWidth=".7" /></Svg>, true],
  ["chrome", <Svg w={28}><circle cx="14" cy="14" r="13.5" fill="#fbc116" /><path d="M14 14L2.300 7.200A13.500 13.500 0 0 1 25.700 7.200z" fill="#e33b2e" /><path d="M2.300 7.200L14 27.500A13.500 13.500 0 0 1 2.300 7.200z" fill="#2a9d4a" /><path d="M2.300 7.200L9 19l5-5z" fill="#2a9d4a" /><path d="M14 7.500h12L2.300 7.200z" fill="#e33b2e" /><circle cx="14" cy="14" r="6.5" fill="#fff" /><circle cx="14" cy="14" r="5" fill="#4285f4" /></Svg>, true],
  ["firefox", <Svg w={30}><path d="M17 1q3 3 4 6 7 3 7 11a13 13 0 0 1-26 0Q1 11 4 7l3 3q5-7 10-9z" fill="#ff8a16" /><path d="M17 1q3 3 4 6 7 3 6 12-3-8-9-9-3-5-1-9z" fill="#ffd43a" /><path d="M3 20q0-8 6-10l8 2-4 4q3 8 12 5-4 8-12 8T3 20z" fill="#f0424d" /><circle cx="15" cy="17" r="5.5" fill="#7a4bd0" /></Svg>, true],
  ["pin", <Svg w={26}><circle cx="13" cy="13" r="12.5" fill="#0a59e0" /><circle cx="13" cy="10.5" r="5" fill="#fff" /><path d="M11 14h4v7h-4z" fill="#fff" /><circle cx="13" cy="10" r="1.8" fill="#0a59e0" /></Svg>],
  ["notepad", <Svg w={28} h={30}><path d="M1 3h20v26H1z" fill="#f4f6ee" /><path d="M1 15q10-6 20-2v16H1z" fill="#5ac02a" /><path d="M3 3v3M6 3v3M9 3v3M12 3v3M15 3v3M18 3v3" stroke="#888" /><circle cx="8" cy="15" r="3.5" stroke="#335" /><circle cx="14" cy="18" r="2.5" stroke="#335" /><path d="M27 2L18 18l-1 3" stroke="#e0902a" strokeWidth="2.2" /></Svg>, true],
  ["postman", <Svg w={30}><circle cx="15" cy="15" r="14" fill="#ff6c37" stroke="#fff" strokeWidth="1.2" /><path d="M8 22l3-5 7-7 2 2-7 7z" stroke="#fff" strokeWidth="1.4" /><circle cx="21" cy="9" r="2.5" fill="#fff" /></Svg>],
  ["vscode", <Svg w={30}><path d="M21.500 0L29 3.500v23L21.500 30 8 17.500 2.500 22 0 20.500 6 15 0 9.500 2.500 8 8 12.500zM21.500 8.500L13.500 15l8 6.500z" fill="#1f9cf0" fillRule="evenodd" /></Svg>],
  ["paint", <Svg w={28} h={30}><path d="M2 1h21v28H2z" fill="#f3f5fa" stroke="#c9d3e4" /><path d="M3 2h19v16H3z" fill="#3465b4" /><path d="M8 2q9 1 14 10V2z" fill="#b6cdee" /><path d="M5 21h15v4H5z" fill="#1b2a4a" /><path d="M27 10L15 22l-4 2" stroke="#8c1c1c" strokeWidth="2.2" /></Svg>],
  ["git", <Svg w={30}><path d="M15 1l6.500 6.500L15 14 8.500 7.500z" fill="#f0747a" /><path d="M7.500 8.500L14 15l-6.500 6.500L1 15z" fill="#7fa8f0" /><path d="M22.500 8.500L29 15l-6.500 6.500L16 15z" fill="#7cc85c" /><path d="M15 16l6.500 6.500L15 29l-6.500-6.500z" fill="#f6da62" /><path d="M15 8v14M15 10l6 5" stroke="#333" strokeWidth="1.6" /><circle cx="15" cy="22" r="2.2" fill="#333" /><circle cx="21" cy="15" r="2.2" fill="#333" /><circle cx="15" cy="9" r="2.2" fill="#333" /></Svg>],
  ["acrobat", <Svg w={28}><rect width="28" height="27" rx="4" fill="#b30b00" /><path d="M14 6c3 0 1 6-3 10s-6 5-6 3.500 4-3.500 9-4 9 .5 8.500 2-5-.5-7.500-4-3-7.500-1-7.500z" stroke="#fff" strokeWidth="1.7" /></Svg>, true, true],
  ["excel", <Svg w={30}><rect x="8" y="1" width="21" height="27" rx="1.5" fill="#21a366" /><path d="M18.500 1H29v9H18.500z" fill="#33c481" /><path d="M8 10h10.500v9H8z" fill="#107c41" /><path d="M8 19h21v9H8z" fill="#185c37" /><rect y="7" width="15" height="15" rx="1" fill="#107c41" /><path d="M4.500 10.500l6 8M10.500 10.500l-6 8" stroke="#fff" strokeWidth="2" /></Svg>, true],
  ["slack", <Svg w={28}><circle cx="14" cy="14" r="14" fill="#fff" /><g strokeWidth="3.2" strokeLinecap="round"><path d="M11.500 6v.5M6.500 11.500h5" stroke="#36c5f0" /><path d="M16.500 6.500v5M21.500 11.500h.5" stroke="#2eb67d" /><path d="M16.500 16.500h5M16.500 21.500v.5" stroke="#ecb22e" /><path d="M11.500 16.500v5M6 16.500h.5" stroke="#e01e5a" /></g></Svg>, true],
];

export default function App() {
  return (
    <Desktop>
      <Global />

      <Browser>
        <TabStrip>
          <BrowserTab $active>
            <Svg w={18} vb="0 0 20 20">{favicons.studip}</Svg>
            <TabTitle $gap={9} $ls={-0.5}>Lecture: Statistik und Wahrscheinlichkeit</TabTitle>
            <Cross s={12} c="#444" />
          </BrowserTab>
          <BrowserTab>
            <Svg w={20}>{favicons.sheet}</Svg>
            <TabTitle $gap={7} $ls={-0.35}>Statistik 2020/21 - Google Sheets</TabTitle>
            <Cross s={12} c="#ccc" />
          </BrowserTab>
          <BrowserTab>
            <Svg w={18} h={14}>
              <path d="M0 1.500V14h4V6z" fill="#4285f4" />
              <path d="M14 6v8h4V1.500z" fill="#34a853" />
              <path d="M0 1l1.500-1L9 6l7.500-6L18 1v2.500L9 10 0 3.500z" fill="#ea4335" />
            </Svg>
            <TabTitle $gap={8} $ls={-0.35}>Inbox (6) - tobiasuhmann@gmail.com</TabTitle>
            <Cross s={12} c="#ccc" />
          </BrowserTab>
          <NewTab>
            <Svg w={16} stroke="#d5d5dc" strokeWidth="1.8"><path d="M8 0v16M0 8h16" /></Svg>
          </NewTab>
        </TabStrip>

        <NavBar>
          <BackButton>
            <Svg w={20} stroke="#2f2f33" strokeWidth="2.4"><path d="M19 10H2M9.500 2.500L2 10l7.500 7.500" /></Svg>
          </BackButton>
          <NavIcon $gap={21}>
            <Svg w={20} stroke="#b6b6b8" strokeWidth="2.2"><path d="M0 10h18M11 3l7 7-7 7" /></Svg>
          </NavIcon>
          <NavIcon $gap={19}>
            <Svg w={20} stroke="#3c3c40" strokeWidth="2.6"><path d="M16.500 13A7.500 7.500 0 1 1 15.500 5" /><path d="M19 .5V9h-8.500z" fill="#3c3c40" stroke="none" /></Svg>
          </NavIcon>
          <NavIcon $gap={156}>
            <Svg w={20} stroke="#3c3c40" strokeWidth="2.2"><path d="M0 11L10 1.500 20 11M3.500 9v9.500h13V9" /><path d="M8 19v-6.500h4V19" /></Svg>
          </NavIcon>
          <UrlBox>
            <Svg w={16} h={18} stroke="#55555a" strokeWidth="1.9"><path d="M8 1.200l6.500 1.500v5Q14.500 14 8 16.800 1.500 14 1.500 7.700v-5z" /><path d="M8 5v7.500q2-1.500 2-5V5z" fill="#55555a" stroke="none" /></Svg>
            <UrlDivider />
            <Svg w={16} h={18}><rect x="0" y="7" width="16" height="11" rx="1.5" fill="#55555a" /><path d="M3.500 8V5.500a4.500 4.500 0 0 1 9 0V8" stroke="#55555a" strokeWidth="2.4" /></Svg>
            <UrlText>https://studip.<b>hs-rm.de</b>/dispatch.php/course/files/index/cdcdded8bb839e60</UrlText>
          </UrlBox>
        </NavBar>

        <BrowserBody>
          <Sidebar>
            <SidebarHead>
              <Svg w={22}><path d="M11 0l3 7.500 8 .5-6.200 5 2.200 8-7-4.500L4 21l2.200-8L0 8l8-.5z" fill="#38383d" /></Svg>
              <span>Bookmarks</span>
              <Chevron w={11} c="#222" />
              <Cross s={14} c="#111" />
            </SidebarHead>
            <SearchField>
              <Svg w={15} stroke="#6d6d70" strokeWidth="1.3"><circle cx="9" cy="6" r="5" /><path d="M5.500 9.500L1 14" /></Svg>
              Search bookmarks
            </SearchField>
            <TreeArea>
              <Tree>
                {tree.map(([level, label, icon, twisty], i) => (
                  <TreeRow key={i} $level={level} $selected={label === "Punkte-Sheet"}>
                    <Twisty>{twisty && <Chevron dir={twisty} w={18} t={2.1} />}</Twisty>
                    <Svg w={20}>{favicons[icon]}</Svg>
                    <span>{label}</span>
                  </TreeRow>
                ))}
              </Tree>
              <Scrollbar>
                <Chevron dir="up" w={10} c="#555" t={1.8} />
                <ScrollThumb $h={499} $top={4} />
                <Chevron w={10} c="#555" t={1.8} />
              </Scrollbar>
            </TreeArea>
          </Sidebar>

          <Site>
            <SiteBar>
              <Svg w={16} h={14}><path d="M0 1.500h16M0 7h16M0 12.500h16" stroke="#fff" strokeWidth="2.8" /></Svg>
              <span>Menu</span>
              <span>Hochschule RheinMain</span>
            </SiteBar>
            <SiteBody>
              <SiteSide>
                <Banner>
                  <svg width="337" height="75" viewBox="0 0 337 75" fill="none">
                    <defs>
                      <linearGradient id="sky" x1="75" y1="0" x2="337" y2="40" gradientUnits="userSpaceOnUse">
                        <stop offset="0" stopColor="#233f6c" />
                        <stop offset=".55" stopColor="#2a5595" />
                        <stop offset="1" stopColor="#2f63a8" />
                      </linearGradient>
                    </defs>
                    <rect x="75" width="262" height="75" fill="url(#sky)" />
                    <path d="M185 75Q250 40 300 0h37v75z" fill="#3a6cb5" opacity=".65" />
                    <path d="M75 30L130 0H75z" fill="#1f3a66" opacity=".5" />
                    <path d="M140 75Q205 45 243 0M218 75Q285 45 330 0M195 75Q250 45 303 0" stroke="#8b2d55" strokeWidth="1" opacity=".8" />
                    <path d="M115 75Q160 45 200 0M90 30L130 0" stroke="#6b3566" strokeWidth=".7" opacity=".5" />
                    <rect width="75" height="75" fill="#7fbb12" />
                    <circle cx="37.5" cy="37.5" r="12" fill="#fff" />
                    <path d="M11 37.500A26.500 26.500 0 1 1 37.500 64.500" stroke="#fff" strokeWidth="9.5" />
                  </svg>
                  <BannerTitle>Files</BannerTitle>
                </Banner>
                <Widget $h={123}>
                  <WidgetTitle>Actions</WidgetTitle>
                  <WidgetList>
                    <WidgetItem>
                      <Svg w={20} stroke={navy} strokeWidth="1.8"><path d="M13 3H1v16h13v-6M4 7h5M4 10.500h3" /><path d="M9 14l2-5 6-7 2 2-6 7z" fill={navy} stroke="none" /></Svg>
                      <span>Edit folder</span>
                    </WidgetItem>
                    <WidgetItem>
                      <Svg w={20} stroke={navy} strokeWidth="1.5"><path d="M12 5H9L8 3H2v14h15v-7" /><path d="M16 0v8M12 4h8" stroke="#d60000" strokeWidth="2" /></Svg>
                      <span>New folder</span>
                    </WidgetItem>
                    <WidgetItem>
                      <Svg w={20} stroke={navy} strokeWidth="1.9"><path d="M11 3H4v16h6v-6h6v-3" /><path d="M13 15h4l-4 4z" fill={navy} stroke="none" /><path d="M16 0v8M12 4h8" stroke="#d60000" strokeWidth="2" /></Svg>
                      <span>Add file</span>
                    </WidgetItem>
                  </WidgetList>
                </Widget>
                <Widget $h={185}>
                  <WidgetTitle>Upload files</WidgetTitle>
                  <DropZone>
                    <Svg w={64} h={60}>
                      <path d="M14.500 22L32 4l17.500 18" stroke={navy} strokeWidth="9" />
                      <path d="M3 34h58v21H3z" stroke={navy} strokeWidth="6" />
                      <circle cx="48" cy="43" r="3.5" fill={navy} />
                    </Svg>
                    <span>Add files via drag and drop to this area.</span>
                  </DropZone>
                </Widget>
                <Widget $h={108} $gap={18}>
                  <WidgetTitle>Views</WidgetTitle>
                  <ActiveView>
                    <Svg w={348} h={36}><path d="M.5 .5H338l9 17.500-9 17.500H.5z" fill="#fee6ad" stroke="#f2c14e" /></Svg>
                    <span>Folder view</span>
                  </ActiveView>
                  <ViewItem>All documents</ViewItem>
                </Widget>
                <Widget $h={73}>
                  <WidgetTitle>Audience-Response</WidgetTitle>
                  <WidgetList>
                    <WidgetItem>
                      <Svg w={20} stroke={navy} strokeWidth="1.6">
                        <path d="M2 2h5v5H2zM13 2h5v5h-5zM2 13h5v5H2z" />
                        <path d="M9.500 1v4M9 8h3v3H9zM1 10h6M13 10h6M10 13v5M13 13h2v2M17 13v5M13 18h2" strokeWidth="1.8" strokeDasharray="3 1" />
                      </Svg>
                      <span>Show QR code</span>
                    </WidgetItem>
                  </WidgetList>
                </Widget>
              </SiteSide>
              <FileTable>
                {files.map(([kind, name, hit], i) => (
                  <FileRow key={i}>
                    <CheckBox />
                    <FileGlyph>{kind === "pdf" ? <PdfFile /> : <PlainFile />}</FileGlyph>
                    <FileName>
                      {hit && <mark>{hit}</mark>}
                      {name}
                    </FileName>
                  </FileRow>
                ))}
              </FileTable>
            </SiteBody>
            <FindBar>
              <FindInput>Celina</FindInput>
              <FindButton><Chevron dir="up" w={17} t={1.9} /></FindButton>
              <FindButton><Chevron w={17} t={1.9} /></FindButton>
              <FindLabel>Highlight All</FindLabel>
            </FindBar>
          </Site>
        </BrowserBody>
      </Browser>

      <Reader>
        <TitleBar>
          <Svg w={15} h={19}>
            <path d="M1 2q0-1 1-1h8.500L14 4.500V17q0 1-1 1H2q-1 0-1-1z" stroke="#e0454b" strokeWidth="1.2" fill="#fff5f5" />
            <path d="M7.500 5c1.500 0 0 4-1 5.500S3.500 14 3.500 13s3-2.500 5-2.500 3.500.5 3 1.500-3-1-4-3.500S6.500 5 7.500 5z" stroke="#d8222a" strokeWidth="1.2" />
          </Svg>
          <span>Celina_Dammkoehler-Chiara_Rummelsberger-1.pdf - Adobe Acrobat Reader DC</span>
          <WindowIcons>
            <Svg w={12} stroke="#111"><path d="M0 5.500h12" /></Svg>
            <Svg w={12} stroke="#111"><path d="M.5 .5h11v11H.5z" /></Svg>
            <Cross s={13} c="#111" t={1.2} />
          </WindowIcons>
        </TitleBar>
        <MenuBar>
          <span>File</span><span>Edit</span><span>View</span><span>Sign</span><span>Window</span><span>Help</span>
        </MenuBar>
        <DocTabs>
          <AppTab $w={87} $pad={18}>Home</AppTab>
          <AppTab $w={95} $pad={17}>Tools</AppTab>
          <DocTab $pad={32}>Shaian_N...</DocTab>
          <DocTab $pad={33}>Gustavo_...</DocTab>
          <DocTab $pad={32}>Oguz_Say...</DocTab>
          <DocTab $pad={31} $active>Celina_Da...<Cross s={9} c="#555" t={1.9} /></DocTab>
          <TabTools>
            <Svg w={28} stroke={G} strokeWidth="2">
              <circle cx="14" cy="14" r="12.3" />
              <path d="M10.500 11.500q0-3.500 3.500-3.500t3.500 3q0 2-2 3t-1.500 2.500M14 18v2.300" strokeWidth="2.3" />
            </Svg>
            <Svg w={22} h={26}>
              <path d="M11 1q1.500 0 1.500 1.800Q18 4 18 11v6q1 2 3.500 3.500H.5Q3 19 4 17v-6q0-7 5.500-8.200Q9.500 1 11 1z" fill={G} />
              <path d="M8 22.500h6q-1 2.500-3 2.500t-3-2.500z" fill={G} />
            </Svg>
            <Svg w={30}>
              <circle cx="15" cy="15" r="15" fill="#09ccf2" />
              <path d="M10 18L15.500 1a15 15 0 0 1 14 17z" fill="#0799be" />
            </Svg>
          </TabTools>
        </DocTabs>
        <ToolBar>
          {toolbarIcons.map(([name, icon]) => (
            <ToolSlot key={name} $gap={25}>{icon}</ToolSlot>
          ))}
          <Underlined $w={36}>3</Underlined>
          <PageTotal><span>/</span><span>4</span></PageTotal>
          <ToolDivider />
          <ToolSlot $w={81} $gap={0}>
            <Svg w={16} h={26}><path d="M0 0l16 14.500-6.500.8L13 23.500l-3.500 1.800-4-8.500L0 21z" fill="#1b74c8" /></Svg>
          </ToolSlot>
          <Underlined $w={78}>
            71.7%
            <Svg w={8} h={6}><path d="M0 0h8L4 6z" fill="#666" /></Svg>
          </Underlined>
          <ToolSlot $w={80} $gap={68}>
            <Svg w={24} h={6}><path d="M3 3h.01M12 3h.01M21 3h.01" stroke={G} strokeWidth="5" strokeLinecap="round" /></Svg>
          </ToolSlot>
          <ToolSlot $gap={25}>
            <Svg w={30} h={28}>
              <g stroke={G} strokeWidth="2.4"><path d="M13 15q-3-3 0-6l5-5q3-3 6 0t0 6l-4 4" /><path d="M14 10q4 3 1 7l-6 6q-3 3-6 0t0-6l4-4" /></g>
              <path d="M16 27a4 4 0 0 1 0-7.500 5 5 0 0 1 9 1 3.300 3.300 0 0 1 2 6.500z" fill={G} />
            </Svg>
          </ToolSlot>
          <ToolSlot $gap={25}>
            <Svg w={28} h={22} stroke={G} strokeWidth="2"><path d="M1 1h26v20H1z" /><path d="M2 2l12 10L26 2M2 20l8.500-10.500M26 20L17.500 9.500" strokeWidth="1.5" /></Svg>
          </ToolSlot>
          <ToolSlot $gap={0}>
            <Svg w={32} h={30}>
              <path d="M12 0q6 0 6 6 0 5-3 8v3l3 1q-4 4-1 7H1v-4q0-2 3-3l5-2v-2q-3-3-3-8 0-6 6-6z" fill={G} />
              <circle cx="23" cy="22" r="7.5" fill={G} /><path d="M19 22h8M23 18v8" stroke="#fff" strokeWidth="1.8" />
            </Svg>
          </ToolSlot>
        </ToolBar>
        <Workspace>
          <NavPane><Svg w={7} h={12}><path d="M0 0l7 6-7 6z" fill="#555" /></Svg></NavPane>
          <Viewport>
            <Sheet $h={624} $y={5}>
              <Clip $top={137} $left={82} $w={459} $h={26} $size={12} $ls={-0.16}>
                <Labeled $top={7} $left={11} $label={16}>
                  <span>b)</span>
                  <Line $left={0} $w={355}>Der Mittelwert ist immer kleiner oder gleich dem Maximum der Stichprobe.</Line>
                </Labeled>
              </Clip>
              <InkLayer />
            </Sheet>
            <Sheet $h={240} $y={16}>
              <Clip $top={21} $left={74} $w={467} $h={220} $size={11.6} $ls={-0.2}>
                <Line $left={11} $w={435}>Es sei eine univariate Stichprobe der Größe 3<i>n</i> (mit <i>n</i> ∈ ℕ<sup>+</sup>) gegeben. Falls <i>n</i> sehr groß ist, ist</Line>
                <Line $left={11} $w={435}>es von Interesse die Berechnung des Mittelwertes {xbar} auf verschiedene Rechner zu verteilen. Wir</Line>
                <Line $left={11} $w={120}>gehen von 3 Rechnern aus.</Line>
                <Labeled $top={9} $left={24} $label={15}>
                  <span>a)</span>
                  <Line $left={0} $w={317}>Alice schlägt folgende Strategie zur Berechnung des Mittelwerts {xbar} vor:</Line>
                </Labeled>
                <Labeled $top={10} $left={54}>
                  <Bullet />
                  <Line $left={0} $w={136}>Teile die Stichprobe in 3 Teile:</Line>
                </Labeled>
                <Parts>
                  <Part $w={45}>x<sub>1</sub>, ..., x<sub>n</sub>,<BraceUnder w={45} /><small>Teil 1</small></Part>
                  <Part $w={61}>x<sub>n+1</sub>, ..., x<sub>2n</sub>,<BraceUnder w={61} /><small>Teil 2</small></Part>
                  <Part $w={64}>x<sub>2n+1</sub>, ..., x<sub>3n</sub><BraceUnder w={64} /><small>Teil 3</small></Part>
                </Parts>
                <Labeled $top={10} $left={54}>
                  <Bullet />
                  <Line $left={0} $w={375}>Berechne auf den 3 Rechnern parallel die Mittelwerte {xbar}<sub>1</sub>, {xbar}<sub>2</sub>, {xbar}<sub>3</sub> der einzelnen Teile.</Line>
                </Labeled>
                <Labeled $top={4} $left={54}>
                  <Bullet />
                  <Line $left={0} $w={375}>Berechne den Gesamt-Mittelwert als das Mittel dieser Werte: {xbar} = <Frac><b>1</b>3</Frac>({xbar}<sub>1</sub> + {xbar}<sub>2</sub> + {xbar}<sub>3</sub>).</Line>
                </Labeled>
                <Line $top={9} $left={39} $w={407}>Ist die Strategie korrekt? Falls ja: Zeigen Sie die Korrektheit. Falls nein: Geben Sie ein</Line>
                <Line $left={39} $w={66}>Gegenbeispiel.</Line>
              </Clip>
              <Author>Celina Dammköhler, Chiara Rummelsberger</Author>
              <svg width="80" height="60" viewBox="994 798 80 60" fill={ink} fontFamily={lato} fontWeight="300">
                <Ink x={1012} y={840} w={36} s={34}>1.3</Ink>
              </svg>
            </Sheet>
          </Viewport>
          <PageScroll>
            <Chevron dir="up" w={10} c="#555" t={1.8} />
            <ScrollThumb $h={159} $top={499} />
            <Chevron w={10} c="#555" t={1.8} />
          </PageScroll>
          <NavPane $line><Svg w={7} h={12}><path d="M7 0L0 6l7 6z" fill="#555" /></Svg></NavPane>
          <ToolPane>
            <PaneTool>
              <Svg w={26} stroke={G} strokeWidth="2.2">
                <circle cx="11" cy="11" r="9.5" /><path d="M18 18l7 7" strokeWidth="3.4" />
                <path d="M9.500 7v8L5.500 11zM12.500 7v8l4-4z" fill={G} stroke="none" />
              </Svg>
            </PaneTool>
            <PaneRule />
            {paneTools.map((icon, i) => (
              <PaneTool key={i}>{icon}</PaneTool>
            ))}
            <PaneTool>
              <Svg w={20} stroke={G} strokeWidth="2"><path d="M2 3v14M5 10h13M13 5l5 5-5 5" /></Svg>
            </PaneTool>
          </ToolPane>
        </Workspace>
      </Reader>

      <TaskBar>
        {taskItems.map(([name, icon, open, active]) => (
          <TaskItem key={name} $open={open} $active={active}>{icon}</TaskItem>
        ))}
        <Tray>
          <Chevron dir="up" w={16} c="#fff" t={1} />
          <Svg w={20} h={16}><path d="M5 5h14v8H5z" stroke="#fff" strokeWidth="1.4" /><path d="M7 7h9v4H7zM0 2h6v5H3v6H1V7H0z" fill="#fff" /></Svg>
          <Svg w={20} h={18} stroke="#fff" strokeWidth="1.2"><path d="M1 6h3l5-4v14l-5-4H1zM12 6q2 3 0 6M14.500 4q4 5 0 10M17 2q5 7 0 14" /></Svg>
          <Svg w={20} h={18}><path d="M5 1l5 3.200-5 3.200L0 4.200zM15 1l5 3.200-5 3.200-5-3.200zM5 7.500l5 3.200-5 3.200-5-3.200zM15 7.500l5 3.200-5 3.200-5-3.200zM5 15l5-3.200 5 3.200-5 3z" fill="#fff" /></Svg>
          <Svg w={18} stroke="#fff" strokeWidth="1.4"><path d="M1 12A12 12 0 0 1 12 2M4 14A9 9 0 0 1 14 5.500M7.500 16A6 6 0 0 1 15 9.500" /><circle cx="14" cy="15" r="2" fill="#fff" /></Svg>
          <Svg w={30} h={18} stroke="#fff" strokeWidth="1.2"><path d="M1 1h28v15H1z" /><path d="M4 5h22M4 8.500h22" strokeDasharray="2 2" /><path d="M8 12.500h14" /></Svg>
          <Clock>3:22 PM<br />11/12/2020</Clock>
          <Svg w={32} h={28}>
            <path d="M4 3h19v15h-8l-4 4v-4H4z" fill="#fff" />
            <circle cx="22" cy="18" r="8.5" fill="#2a2a28" stroke="#ddd" />
            <text x="22" y="22.5" fontFamily={ui} fontSize="12.5" textAnchor="middle" fill="#fff">6</text>
          </Svg>
        </Tray>
      </TaskBar>

      <ShareBar>
        <Grip />
        <ShareText>bbb.cs.hs-rm.de is sharing your screen.</ShareText>
        <StopButton>Stop sharing</StopButton>
        <HideLink>Hide</HideLink>
      </ShareBar>
      <FullBadge>
        <Svg w={15} stroke="#fff" strokeWidth="1.3"><path d="M1 1l5 5M6 2v4H2M14 1L9 6M9 2v4h4M1 14l5-5M2 9h4v4M14 14L9 9M13 9H9v4" /></Svg>
      </FullBadge>
    </Desktop>
  );
}
